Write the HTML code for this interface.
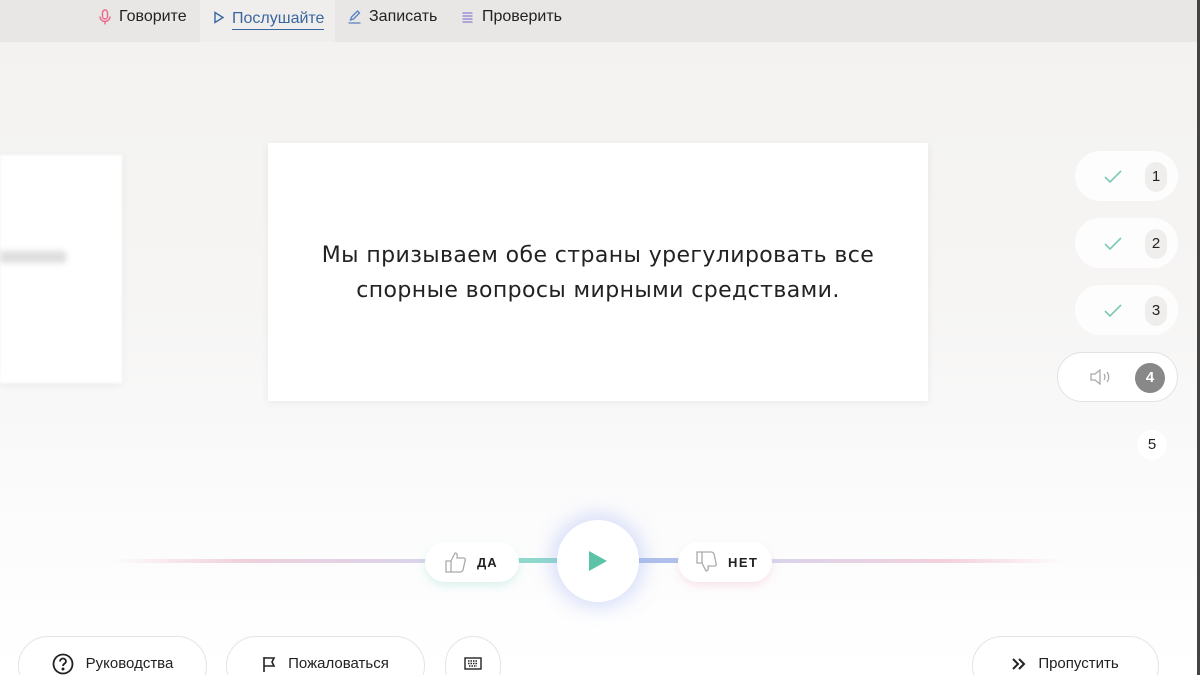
<!DOCTYPE html>
<html style="width:1200px;height:675px;overflow:hidden"><head><meta charset="utf-8"><style>
*{margin:0;padding:0;box-sizing:border-box}
body{width:1200px;height:675px;overflow:hidden;position:relative;font-family:"Liberation Sans","Noto Sans CJK SC",sans-serif;background:linear-gradient(#f3f2f0 0,#f6f5f4 300px,#fbfbfc 500px,#fff 675px);color:#222}
.top{position:absolute;left:0;top:0;width:1200px;height:42px;background:#e8e7e5}
.tab{position:absolute;top:0;height:34px;font-size:16px;color:#222;display:flex;align-items:center}
.tab svg{margin-right:7px}
.card{position:absolute;background:#fff;box-shadow:0 2px 8px rgba(0,0,0,.06)}
.pill{position:absolute;height:50px;border-radius:25px;background:#fdfdfd}
.num{position:absolute;width:22px;height:30px;border-radius:11px;background:#efeeed;font-size:15px;text-align:center;line-height:30px;color:#222}
.btn{position:absolute;top:636px;height:60px;border:1px solid #e4e4e4;border-radius:30px;background:#fff;font-size:15px;display:flex;align-items:flex-start;justify-content:center;padding-top:16px;color:#222;line-height:22px}
.btn svg{margin-right:12px}
</style></head><body>
<div class="top"></div>
<div style="position:absolute;left:200px;top:0;width:135px;height:42px;background:#efeeec"></div>
<div class="tab" style="left:98px"><svg width="14" height="16" viewBox="0 0 12 16" fill="none" stroke="#e36" stroke-width="1.4" opacity=".7"><rect x="3.5" y="1" width="5" height="9" rx="2.5"/><path d="M1 7.5a5 5 0 0010 0M6 12.5v3"/></svg>Говорите</div>
<div class="tab" style="left:213px;color:#3a67a0"><svg width="12" height="13" viewBox="0 0 11 13" fill="none" stroke="#3a67a0" stroke-width="1.4"><path d="M1.5 1.5l8 5-8 5z"/></svg><span style="border-bottom:1.5px solid #3a67a0;line-height:20px;margin-top:4px">Послушайте</span></div>
<div class="tab" style="left:347px"><svg width="15" height="14" viewBox="0 0 14 14" fill="none" stroke="#5a7fc0" stroke-width="1.3"><path d="M3 10l1-3 6-6 2 2-6 6-3 1zM1 13h12"/></svg>Записать</div>
<div class="tab" style="left:460px"><svg width="15" height="12" viewBox="0 0 14 12" fill="none" stroke="#8a7fd0" stroke-width="1.3"><path d="M2 2h10M2 5h10M2 8h10M2 11h10"/></svg>Проверить</div>

<div class="card" style="left:0;top:155px;width:122px;height:228px;filter:blur(1px)"><div style="position:absolute;left:0;top:96px;width:66px;height:12px;background:#ddd;filter:blur(3px)"></div></div>
<div class="card" style="left:268px;top:143px;width:660px;height:258px;display:flex;align-items:center;justify-content:center;text-align:center;font-family:'DejaVu Sans',sans-serif;font-size:22px;line-height:35px;letter-spacing:.4px;color:#222;padding-top:2px">Мы призываем обе страны урегулировать все<br>спорные вопросы мирными средствами.</div>

<div class="pill" style="left:1075px;top:151px;width:103px"></div>
<div class="pill" style="left:1075px;top:218px;width:103px"></div>
<div class="pill" style="left:1075px;top:285px;width:103px"></div>
<svg style="position:absolute;left:1104px;top:170px" width="18" height="14" viewBox="0 0 18 14" fill="none" stroke="#7cc9b5" stroke-width="1.6"><path d="M1 7l5 5L17 1"/></svg>
<svg style="position:absolute;left:1104px;top:237px" width="18" height="14" viewBox="0 0 18 14" fill="none" stroke="#7cc9b5" stroke-width="1.6"><path d="M1 7l5 5L17 1"/></svg>
<svg style="position:absolute;left:1104px;top:304px" width="18" height="14" viewBox="0 0 18 14" fill="none" stroke="#7cc9b5" stroke-width="1.6"><path d="M1 7l5 5L17 1"/></svg>
<div class="num" style="left:1145px;top:162px">1</div>
<div class="num" style="left:1145px;top:229px">2</div>
<div class="num" style="left:1145px;top:296px">3</div>
<div class="pill" style="left:1057px;top:352px;width:121px;border:1.5px solid #e2e2e2;background:#fff"></div>
<svg style="position:absolute;left:1090px;top:369px" width="22" height="16" viewBox="0 0 22 16" fill="none" stroke="#aaa" stroke-width="1.3"><path d="M1 5h4l5-4v14l-5-4H1z M14 5q2 3 0 6M17 3q3.5 5 0 10"/></svg>
<div style="position:absolute;left:1135px;top:363px;width:30px;height:30px;border-radius:15px;background:#888;color:#fff;font-size:15px;font-weight:bold;text-align:center;line-height:30px">4</div>
<div style="position:absolute;left:1137px;top:430px;width:30px;height:30px;border-radius:15px;background:#fff;font-size:15px;text-align:center;line-height:30px">5</div>
<div style="position:absolute;left:1197px;top:0;width:3px;height:675px;background:#444"></div>

<div style="position:absolute;left:110px;top:559px;width:330px;height:4px;background:linear-gradient(90deg,transparent,#f0d0dc 40%,#d8d4ec)"></div>
<div style="position:absolute;left:515px;top:558px;width:50px;height:5px;background:#8fd8cc"></div>
<div style="position:absolute;left:635px;top:558px;width:50px;height:5px;background:#b0c0ec"></div>
<div style="position:absolute;left:765px;top:559px;width:300px;height:4px;background:linear-gradient(90deg,#d8d4ec,#f4d0dc 60%,transparent)"></div>
<div style="position:absolute;left:425px;top:542px;width:94px;height:40px;border-radius:20px;background:#fff;box-shadow:0 4px 8px rgba(120,210,190,.25);display:flex;align-items:center;padding-left:20px;font-weight:bold;font-size:13px;letter-spacing:1px"><svg width="22" height="22" viewBox="0 0 22 22" fill="none" stroke="#aaa" stroke-width="1.3" style="margin-right:10px"><path d="M1 10h5v11H1zM6 10l4-8q3 0 2 5h7q2 1 1 3l-2 9q-1 2-3 2H6"/></svg>ДА</div>
<div style="position:absolute;left:678px;top:542px;width:94px;height:40px;border-radius:20px;background:#fff;box-shadow:0 4px 8px rgba(240,160,180,.25);display:flex;align-items:center;padding-left:18px;font-weight:bold;font-size:13px;letter-spacing:1.5px"><svg width="22" height="22" viewBox="0 0 22 22" fill="none" stroke="#aaa" stroke-width="1.3" style="margin-right:10px"><path d="M1 1h5v11H1zM6 12l4 8q3 0 2-5h7q2-1 1-3l-2-9q-1-2-3-2H6"/></svg>НЕТ</div>
<div style="position:absolute;left:557px;top:520px;width:82px;height:82px;border-radius:41px;background:#fff;box-shadow:0 0 18px 6px rgba(150,170,240,.35)"></div>
<svg style="position:absolute;left:588px;top:550px" width="20" height="22" viewBox="0 0 20 22"><path d="M1 1l18 10L1 21z" fill="#5cc3a6"/></svg>

<div class="btn" style="left:18px;width:189px"><svg width="22" height="22" viewBox="0 0 22 22" fill="none" stroke="#222" stroke-width="1.8"><circle cx="11" cy="11" r="9.5"/><path d="M8 8.5a3 3 0 116 0c0 2-3 2-3 4.5"/><circle cx="11" cy="16" r=".6" fill="#222"/></svg>Руководства</div>
<div class="btn" style="left:226px;width:199px;padding-top:19px;line-height:16px"><svg width="14" height="16" viewBox="0 0 14 16" fill="none" stroke="#222" stroke-width="1.6"><path d="M2 1v15M2 2h10l-2 4 2 4H2"/></svg>Пожаловаться</div>
<div class="btn" style="left:445px;width:56px;padding-top:20px"><svg width="18" height="13" viewBox="0 0 18 13" fill="none" stroke="#222" stroke-width="1.4" style="margin:0"><rect x="1" y="1" width="16" height="11"/><path d="M4 4h10M4 6.5h10M5 9h8" stroke-dasharray="1.5 1"/></svg></div>
<div class="btn" style="left:972px;width:187px;padding-top:19px;line-height:16px"><svg width="14" height="12" viewBox="0 0 14 12" fill="none" stroke="#222" stroke-width="2" style="margin-top:2px"><path d="M1 1l5 5-5 5M7 1l5 5-5 5"/></svg>Пропустить</div>
</body></html>
